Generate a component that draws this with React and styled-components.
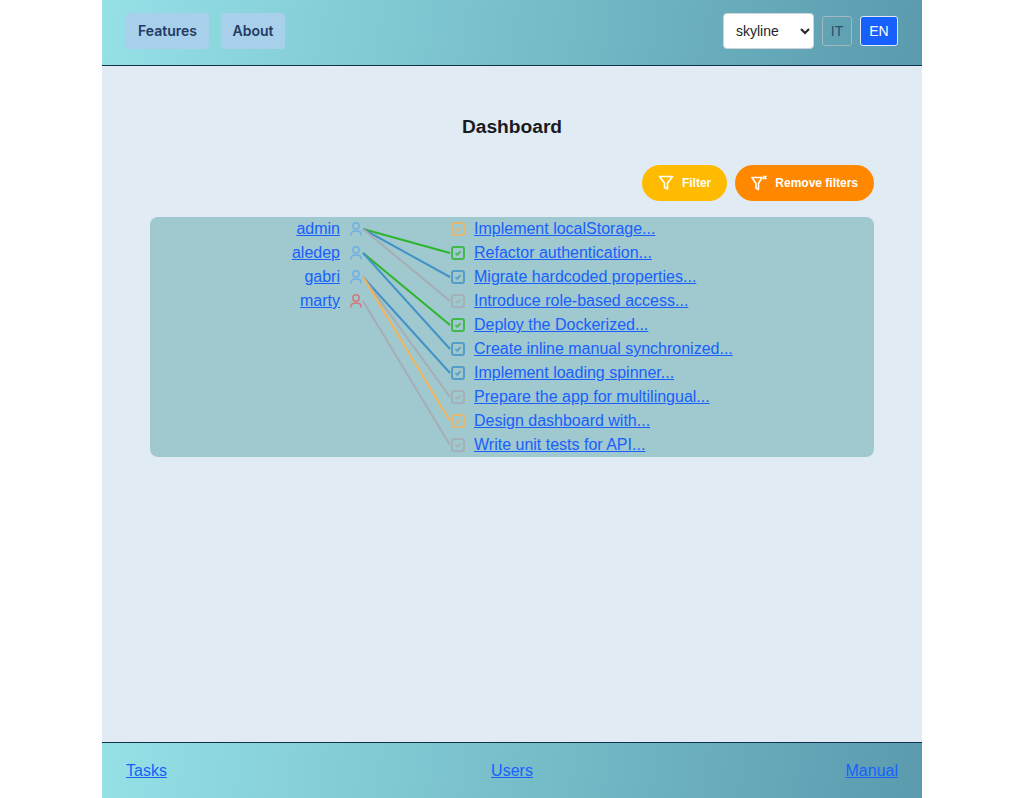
import React from "react";
import styled, { createGlobalStyle } from "styled-components";

const Global = createGlobalStyle`
  html, body { margin: 0; padding: 0; background: #fff; }
  body { font-family: "Liberation Sans", Arial, sans-serif; }
`;
const Page = styled.div`
  width: 820px; height: 798px; margin: 0 0 0 102px;
  display: flex; flex-direction: column; background: #e1ebf4;
`;
const Header = styled.header`
  height: 62px; padding: 0 24px 3px; border-bottom: 1px solid #12324a;
  background: linear-gradient(100deg, #95e1e6 0%, #5a9bae 100%);
  display: flex; align-items: center; justify-content: space-between;
`;
const Footer = styled.footer`
  height: 55px; padding: 0 24px; border-top: 1px solid #12324a;
  background: linear-gradient(100deg, #95e1e6 0%, #5a9bae 100%);
  display: grid; grid-template-columns: 1fr auto 1fr; align-items: center;
`;
const FooterEnd = styled.div`
  display: flex; justify-content: ${p => (p.$right ? "flex-end" : "flex-start")};
`;
const Group = styled.div`display: flex; align-items: center; gap: ${p => p.$gap}px;`;
const NavButton = styled.button`
  height: 36px; padding: 0 0 2px; border: 0; border-radius: 4px; background: #a8d0ea; color: #1f3a63;
  font: 600 14px "Inter", "Liberation Sans", sans-serif;
  width: ${p => p.$w}px;
`;
const Select = styled.select`
  width: 91px; height: 36px; border: 1px solid #ced4da; border-radius: 4px; background-color: #fff; color: #212529;
  font: 14px "Liberation Sans", sans-serif; padding: 0 0 0 8px;
`;
const Lang = styled.button`
  height: 30px; border-radius: 3px; padding: 0; font: 14px "Liberation Sans", sans-serif;
  width: ${p => p.$w}px;
  border: 1px solid ${p => (p.$on ? "#e1ebf4" : "#a3b8c0")};
  background: ${p => (p.$on ? "#1760fd" : "transparent")};
  color: ${p => (p.$on ? "#fff" : "#2c4c6b")};
`;
const Main = styled.main`flex: 1; padding: 0 48px; display: flex; flex-direction: column;`;
const Title = styled.h1`
  margin: 50px 0 0; height: 22px; line-height: 22px; text-align: center; font-size: 19.2px; font-weight: 700; color: #1b1b1f;
`;
const Actions = styled.div`display: flex; justify-content: flex-end; gap: 8px; margin-top: 27px; height: 36px;`;
const Pill = styled.button`
  height: 36px; border: 0; border-radius: 18px; padding: 0 16px; display: flex; align-items: center; gap: 8px;
  color: #fff; font: bold 12px "Liberation Sans", sans-serif; background: ${p => p.$bg};
`;
const Graph = styled.section`
  position: relative; margin-top: 16px; height: 240px; background: #9fc8cf; border-radius: 8px;
  display: grid; grid-template-columns: 212px 1fr; column-gap: 89px;
`;
const Lines = styled.svg`position: absolute; inset: 0; pointer-events: none;`;
const Col = styled.div`display: flex; flex-direction: column;`;
const UserRow = styled.div`
  height: 24px; display: flex; align-items: center; justify-content: flex-end; gap: 10px;
  color: ${p => p.$c};
`;
const TaskRow = styled.div`
  height: 24px; display: flex; align-items: center; gap: 9px;
  color: ${p => p.$c};
`;
const IconWrap = styled.svg`display: block; flex: none; opacity: ${p => p.$o};`;
const A = styled.a`color: #1760fd; font-size: 16px; line-height: 20px; text-decoration: underline;`;

const FunnelIcon = () => (
  <svg width="16" height="16" viewBox="0 0 16 16" fill="none" stroke="currentColor" strokeWidth="1.6" strokeLinejoin="round">
    <path d="M1.500 1.500h13L9.500 8v6l-3-1.500V8z" />
  </svg>
);
const FunnelXIcon = () => (
  <svg width="16" height="16" viewBox="0 0 16 16" fill="none" stroke="currentColor" strokeWidth="1.6" strokeLinejoin="round">
    <path d="M1 2.500h10L7.500 8.500v6L5 13V8.500z" />
    <path d="M12 .8l3.500 3.500m0-3.500L12 4.300" strokeWidth="1.500" />
  </svg>
);
const TaskIcon = () => (
  <IconWrap $o={0.8} width="14" height="14" viewBox="0 0 14 14" fill="none" stroke="currentColor">
    <rect x="1" y="1" width="12" height="12" rx="2" strokeWidth="2" />
    <path d="M4.500 7.200l1.800 1.700 3.200-3.500" strokeWidth="1.600" />
  </IconWrap>
);
const UserIcon = () => (
  <IconWrap $o={0.78} width="12" height="14" viewBox="0 0 12 14" fill="none" stroke="currentColor" strokeWidth="1.500">
    <circle cx="6" cy="4" r="3.200" />
    <path d="M1 13.500v-1.300A3.200 3.200 0 0 1 4.200 9.200h3.600A3.200 3.200 0 0 1 11 12.200v1.300" />
  </IconWrap>
);

const blue = "#4393c7", green = "#2db52d", gray = "#a6adb3", orange = "#f2b45a";
const users = [["admin", "#66a9e8"], ["aledep", "#66a9e8"], ["gabri", "#66a9e8"], ["marty", "#e0645f"]];
const tasks = [
  ["Implement localStorage...", orange], ["Refactor authentication...", green],
  ["Migrate hardcoded properties...", blue], ["Introduce role-based access...", gray],
  ["Deploy the Dockerized...", green], ["Create inline manual synchronized...", blue],
  ["Implement loading spinner...", blue], ["Prepare the app for multilingual...", gray],
  ["Design dashboard with...", orange], ["Write unit tests for API...", gray],
];
const links = [
  [0, 1], [0, 2], [0, 3], [1, 4], [1, 5], [2, 6], [2, 7], [2, 8], [3, 9],
];

export default function App() {
  return (
    <>
      <Global />
      <Page>
        <Header>
          <Group $gap={12}>
            <NavButton $w={83}>Features</NavButton>
            <NavButton $w={64}>About</NavButton>
          </Group>
          <Group $gap={8}>
            <Select defaultValue="skyline"><option>skyline</option></Select>
            <Lang $w={30}>IT</Lang>
            <Lang $w={38} $on>EN</Lang>
          </Group>
        </Header>
        <Main>
          <Title>Dashboard</Title>
          <Actions>
            <Pill $bg="#ffbb00"><FunnelIcon />Filter</Pill>
            <Pill $bg="#ff8800"><FunnelXIcon />Remove filters</Pill>
          </Actions>
          <Graph>
            <Lines width="724" height="240">
              {links.map(([u, t]) => (
                <line key={t} x1={213} y1={12 + u * 24} x2={300} y2={12 + t * 24}
                  stroke={tasks[t][1]} strokeWidth="2" />
              ))}
            </Lines>
            <Col>
              {users.map(([n, c]) => (
                <UserRow key={n} $c={c}>
                  <A href="#">{n}</A>
                  <UserIcon />
                </UserRow>
              ))}
            </Col>
            <Col>
              {tasks.map(([n, c]) => (
                <TaskRow key={n} $c={c}>
                  <TaskIcon />
                  <A href="#">{n}</A>
                </TaskRow>
              ))}
            </Col>
          </Graph>
        </Main>
        <Footer>
          <FooterEnd><A href="#">Tasks</A></FooterEnd>
          <A href="#">Users</A>
          <FooterEnd $right><A href="#">Manual</A></FooterEnd>
        </Footer>
      </Page>
    </>
  );
}
